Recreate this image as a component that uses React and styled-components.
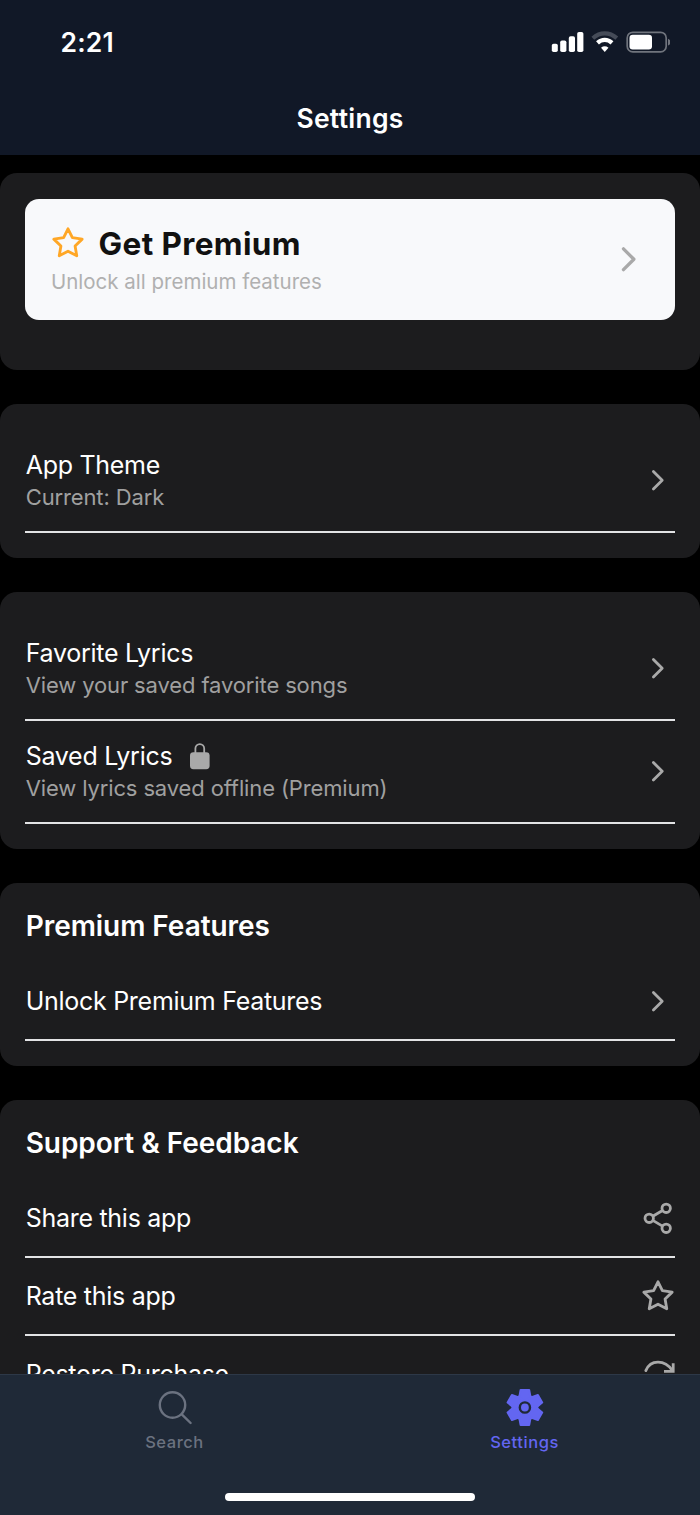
import React from 'react';
import styled, { createGlobalStyle } from 'styled-components';
import { FiStar } from 'react-icons/fi';

function StatusIcons() {
  return (
    <svg width="120" height="24" viewBox="0 0 120 24" fill="none">
      <g fill="#fff">
        <rect x="1.8" y="13.8" width="6" height="8.2" rx="1.8" />
        <rect x="10.2" y="10.4" width="6.2" height="11.6" rx="1.8" />
        <rect x="18.8" y="6.2" width="6.2" height="15.8" rx="1.8" />
        <rect x="27.2" y="2" width="6.2" height="20" rx="1.8" />
      </g>
      <path d="M42.8 8.2C50 1.8 59.5 1.8 66.8 8.2" stroke="#454b58" strokeWidth="4.2" />
      <path d="M47.5 12.9C51.8 8.9 57.7 8.9 62 12.9" stroke="#fff" strokeWidth="4.2" />
      <path d="M51 17.8Q54.75 14.9 58.5 17.8L54.75 21.9Z" fill="#fff" />
      <rect x="77.2" y="2.3" width="39" height="19.6" rx="5.6" stroke="#70747d" strokeWidth="1.7" />
      <rect x="79.5" y="4.7" width="22.5" height="14.8" rx="3.2" fill="#fff" />
      <path d="M118 8.8c3.4 1.2 3.4 5.6 0 6.8z" fill="#70747d" />
    </svg>
  );
}

function ChevronIcon({ size = 33 }) {
  return (
    <svg width={size} height={size} viewBox="0 0 33 33" fill="none" stroke="#a9a9a9" strokeWidth="2.8" strokeLinecap="round" strokeLinejoin="round">
      <path d="M11.4 7.5L20.2 16.3L11.4 25.1" />
    </svg>
  );
}

function LockIcon() {
  return (
    <svg width="29" height="29" viewBox="0 0 29 29" fill="none">
      <rect x="5" y="10.2" width="19.6" height="17" rx="3.4" fill="#a9a9a9" />
      <path d="M10.4 11V6.6a4.4 4.4 0 0 1 8.8 0V11" stroke="#a9a9a9" strokeWidth="1.8" />
    </svg>
  );
}

function ShareIcon() {
  return (
    <svg width="33" height="33" viewBox="0 0 33 33" fill="none" stroke="#a9a9a9" strokeWidth="2.8">
      <circle cx="7.2" cy="16.3" r="4.2" />
      <circle cx="24.2" cy="6.3" r="4.2" />
      <circle cx="24.2" cy="26.3" r="4.2" />
      <path d="M10.8 14.2L20.5 8.5M10.8 18.4L20.5 24.1" />
    </svg>
  );
}

function RedoIcon() {
  return (
    <svg width="33" height="33" viewBox="0 0 33 33" fill="none" stroke="#a9a9a9" strokeWidth="2.8" strokeLinecap="round">
      <path d="M3.8 12.6C8.5 1.5 22.5 1.2 30.5 12.6" />
      <path d="M31.2 5.2V13.4H22" strokeLinecap="butt" />
    </svg>
  );
}

function SearchIcon() {
  return (
    <svg width="39" height="39" viewBox="0 0 39 39" fill="none" stroke="currentColor" strokeWidth="2.4" strokeLinecap="round">
      <circle cx="16.5" cy="17" r="12.7" />
      <path d="M25.8 26.3L34.6 35" />
    </svg>
  );
}

function GearIcon() {
  return (
    <svg width="39" height="39" viewBox="0 0 39 39">
      <g transform="translate(18.9 19.5)" fill="currentColor" stroke="currentColor" strokeWidth="2" strokeLinejoin="round">
        <circle r="12.4" />
        {[0, 60, 120].map((angle) => (
          <path key={angle} transform={`rotate(${angle})`} d="M-4.3 -17.5H4.3L5.5 -11V11L4.3 17.5H-4.3L-5.5 11V-11Z" />
        ))}
        <circle r="5.1" stroke="#1f2937" strokeWidth="2.4" />
      </g>
    </svg>
  );
}

function SettingRow({ title, description, locked, icon }) {
  return (
    <Row $tall={Boolean(description)}>
      <RowContent>
        <RowTitle>
          {title}
          {locked && <LockIcon />}
        </RowTitle>
        {description && <RowDescription>{description}</RowDescription>}
      </RowContent>
      {icon || <ChevronIcon />}
    </Row>
  );
}

function App() {
  return (
    <Screen>
      <GlobalStyle />
      <StatusBar>
        <Clock>2:21</Clock>
        <StatusIcons />
      </StatusBar>
      <Header>Settings</Header>

      <Content>
        <Section $height={197}>
          <PremiumCard>
            <div>
              <PremiumTitle>
                <FiStar size={34} color="#ffa726" />
                <span>Get Premium</span>
              </PremiumTitle>
              <PremiumText>Unlock all premium features</PremiumText>
            </div>
            <ChevronIcon size={39} />
          </PremiumCard>
        </Section>

        <Section>
          <SettingRow title="App Theme" description="Current: Dark" />
        </Section>

        <Section>
          <SettingRow title="Favorite Lyrics" description="View your saved favorite songs" />
          <SettingRow title="Saved Lyrics" description="View lyrics saved offline (Premium)" locked />
        </Section>

        <Section>
          <SectionTitle>Premium Features</SectionTitle>
          <SettingRow title="Unlock Premium Features" />
        </Section>

        <Section>
          <SectionTitle>Support &amp; Feedback</SectionTitle>
          <SettingRow title="Share this app" icon={<ShareIcon />} />
          <SettingRow title="Rate this app" icon={<FiStar size={34} />} />
          <SettingRow title="Restore Purchase" icon={<RedoIcon />} />
        </Section>
      </Content>

      <TabBar>
        <Tabs>
          <Tab>
            <SearchIcon />
            <TabLabel>Search</TabLabel>
          </Tab>
          <Tab $active>
            <GearIcon />
            <TabLabel>Settings</TabLabel>
          </Tab>
        </Tabs>
        <HomeIndicator />
      </TabBar>
    </Screen>
  );
}

const GlobalStyle = createGlobalStyle`
  * {
    box-sizing: border-box;
  }

  body {
    margin: 0;
    background: #000;
    font-family: Inter, sans-serif;
  }

  svg {
    display: block;
    flex-shrink: 0;
  }
`;

const Screen = styled.div`
  display: flex;
  flex-direction: column;
  width: 700px;
  height: 1515px;
  overflow: hidden;
  background: #000;
`;

const StatusBar = styled.div`
  display: flex;
  flex-shrink: 0;
  align-items: center;
  justify-content: space-between;
  height: 84px;
  padding: 0 30px 0 60.5px;
  background: #111827;
  color: #fff;
`;

const Clock = styled.div`
  font-size: 26.5px;
  font-weight: 600;
  letter-spacing: 0.2px;
  line-height: 32px;
`;

const Header = styled.h1`
  flex-shrink: 0;
  height: 71px;
  margin: 0;
  background: #111827;
  color: #fff;
  font-size: 26.5px;
  font-weight: 600;
  letter-spacing: 0.25px;
  line-height: 68px;
  text-align: center;
`;

const Content = styled.div`
  display: flex;
  flex: 1;
  flex-direction: column;
  gap: 34px;
  min-height: 0;
  overflow: hidden;
  padding-top: 18px;
`;

const Section = styled.section`
  flex-shrink: 0;
  height: ${({ $height }) => ($height ? `${$height}px` : 'auto')};
  padding: 26px 25px 25px;
  border-radius: 17px;
  background: #1c1c1e;
`;

const SectionTitle = styled.h2`
  height: 54px;
  margin: 0;
  padding-left: 0.7px;
  color: #fff;
  font-size: 28px;
  font-weight: 600;
  letter-spacing: -0.05px;
  line-height: 35px;
`;

const PremiumCard = styled.div`
  display: flex;
  align-items: center;
  justify-content: space-between;
  height: 121px;
  padding: 0 26px;
  border-radius: 14px;
  background: #f8f9fb;
`;

const PremiumTitle = styled.div`
  display: flex;
  align-items: center;
  gap: 13.5px;
  height: 39px;
  color: #111;
  font-size: 31.5px;
  font-weight: 700;
  letter-spacing: 0.38px;

  span {
    padding-top: 2px;
  }
`;

const PremiumText = styled.div`
  margin-top: 6px;
  color: #b0b0b0;
  font-size: 20.5px;
  line-height: 28px;
`;

const Row = styled.div`
  display: flex;
  align-items: center;
  justify-content: space-between;
  height: ${({ $tall }) => ($tall ? 103 : 78)}px;
  border-bottom: 2px solid #e2e3e5;
  color: #a9a9a9;
`;

const RowContent = styled.div`
  display: flex;
  flex-direction: column;
  padding: 1px 0 0 0.7px;
`;

const RowTitle = styled.div`
  display: flex;
  align-items: center;
  gap: 12.5px;
  height: 33px;
  color: #fff;
  font-size: 25px;
  letter-spacing: -0.28px;
  line-height: 33px;
`;

const RowDescription = styled.div`
  color: #a0a0a0;
  font-size: 22px;
  letter-spacing: -0.13px;
  line-height: 31px;
`;

const TabBar = styled.nav`
  display: flex;
  flex-direction: column;
  flex-shrink: 0;
  align-items: center;
  justify-content: space-between;
  height: 141px;
  padding-bottom: 14px;
  border-top: 1px solid #2d3847;
  background: #1f2937;
`;

const Tabs = styled.div`
  display: grid;
  grid-template-columns: 1fr 1fr;
  width: 100%;
`;

const Tab = styled.div`
  display: flex;
  flex-direction: column;
  align-items: center;
  padding-top: 13px;
  color: ${({ $active }) => ($active ? '#6366f1' : '#6b7280')};
`;

const TabLabel = styled.span`
  margin: 5px 1px 0 0;
  font-size: 16.5px;
  font-weight: 500;
  letter-spacing: 0.55px;
  line-height: 20px;
`;

const HomeIndicator = styled.div`
  width: 250px;
  height: 8px;
  border-radius: 4px;
  background: #fff;
`;

export default App;
